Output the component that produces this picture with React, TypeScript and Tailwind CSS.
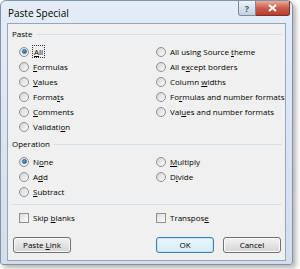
import React from 'react'

type Opt = { label: string; key: number; checked?: boolean; focus?: boolean }

const pasteLeft: Opt[] = [
  { label: 'All', key: 0, checked: true, focus: true },
  { label: 'Formulas', key: 0 },
  { label: 'Values', key: 0 },
  { label: 'Formats', key: 5 },
  { label: 'Comments', key: 0 },
  { label: 'Validation', key: 8 },
]

const pasteRight: Opt[] = [
  { label: 'All using Source theme', key: 17 },
  { label: 'All except borders', key: 5 },
  { label: 'Column widths', key: 7 },
  { label: 'Formulas and number formats', key: 2 },
  { label: 'Values and number formats', key: 3 },
]

const opLeft: Opt[] = [
  { label: 'None', key: 1, checked: true },
  { label: 'Add', key: 1 },
  { label: 'Subtract', key: 0 },
]

const opRight: Opt[] = [
  { label: 'Multiply', key: 0 },
  { label: 'Divide', key: 1 },
]

const Label = ({ label, k }: { label: string; k: number }) => (
  <span className="whitespace-nowrap">
    {label.slice(0, k)}
    <u>{label[k]}</u>
    {label.slice(k + 1)}
  </span>
)

const Radio = ({ checked }: { checked?: boolean }) => (
  <span className="w-[10px] h-[10px] rounded-full border border-[#8e8f8f] bg-gradient-to-br from-[#d4d4d4] to-[#fbfbfb] flex items-center justify-center shrink-0">
    {checked && <span className="w-[5px] h-[5px] rounded-full bg-gradient-to-br from-[#76b6ea] to-[#1b5fa8] border border-[#2c628b]" />}
  </span>
)

const Check = () => (
  <span className="w-[10px] h-[10px] border border-[#8e8f8f] bg-gradient-to-br from-[#dcdcdc] to-[#fdfdfd] shrink-0" />
)

const RadioRow = ({ o }: { o: Opt }) => (
  <div className="h-[15px] flex items-center gap-[4px] whitespace-nowrap">
    <Radio checked={o.checked} />
    <span className={o.focus ? 'outline outline-1 outline-dotted outline-[#333] px-[1px] leading-[11px]' : ''}>
      <Label label={o.label} k={o.key} />
    </span>
  </div>
)

const GroupHeader = ({ title }: { title: string }) => (
  <div className="h-[14px] flex items-center gap-[4px]">
    <span>{title}</span>
    <div className="flex-1 h-px bg-[#d5dfe5]" />
  </div>
)

const Btn = ({ children, def }: { children: React.ReactNode; def?: boolean }) => (
  <div
    className={
      'w-[58px] h-[16px] rounded-[3px] border flex items-center justify-center ' +
      (def
        ? 'border-[#3c7fb1] bg-gradient-to-b from-[#eaf6fd] to-[#d6edf9] shadow-[inset_0_0_0_1px_#c4e5f6]'
        : 'border-[#707070] bg-gradient-to-b from-[#f2f2f2] to-[#d5d5d5] shadow-[inset_0_0_0_1px_#fafafa]')
    }
  >
    {children}
  </div>
)

export default function App() {
  return (
    <div className="w-[300px] h-[269px] bg-white" style={{ fontFamily: '"Open Sans", "Noto Sans", sans-serif' }}>
      <div className="w-[293px] h-[265px] rounded-t-[6px] rounded-b-[3px] border border-[#8393a6] bg-gradient-to-b from-[#e4edf7] to-[#d3deeb] shadow-[3px_3px_5px_rgba(0,0,0,0.3)] flex flex-col">
        <div className="h-[22px] flex justify-between items-start shrink-0">
          <span className="text-[10px] text-black ml-[7px] mt-[6px] leading-[13px]">Paste Special</span>
          <div className="flex mr-[2px]">
            <div className="w-[18px] h-[15px] rounded-bl-[3px] border border-t-0 border-[#7b8a9b] bg-gradient-to-b from-[#eef3f9] to-[#c3d0df] flex items-center justify-center text-[9px] text-[#4a5868] font-bold leading-none">?</div>
            <div className="w-[34px] h-[15px] rounded-br-[3px] border border-t-0 border-l-0 border-[#7a3328] bg-gradient-to-b from-[#e8ab9c] via-[#cc5b4b] to-[#b63e2e] flex items-center justify-center">
              <svg width="9" height="8" viewBox="0 0 9 8">
                <path d="M1 1 L8 7 M8 1 L1 7" stroke="#fff" strokeWidth="2" />
              </svg>
            </div>
          </div>
        </div>
        <div className="mx-[6px] mb-[3px] flex-1 border border-[#97a7ba] bg-[#f0f0f0] pl-[4px] pr-[3px] pt-[3px] text-[8px] leading-[12px] text-black">
          <GroupHeader title="Paste" />
          <div className="mt-[3px] grid grid-cols-[137px_1fr] pl-[7px]">
            <div>{pasteLeft.map(o => <RadioRow key={o.label} o={o} />)}</div>
            <div>{pasteRight.map(o => <RadioRow key={o.label} o={o} />)}</div>
          </div>
          <div className="mt-[3px]">
            <GroupHeader title="Operation" />
          </div>
          <div className="mt-[3px] grid grid-cols-[137px_1fr] pl-[7px]">
            <div>{opLeft.map(o => <RadioRow key={o.label} o={o} />)}</div>
            <div>{opRight.map(o => <RadioRow key={o.label} o={o} />)}</div>
          </div>
          <div className="mt-[5px] h-px bg-[#d5dfe5]" />
          <div className="mt-[5px] grid grid-cols-[137px_1fr] pl-[7px]">
            <div className="h-[15px] flex items-center gap-[4px]"><Check /><Label label="Skip blanks" k={5} /></div>
            <div className="h-[15px] flex items-center gap-[4px]"><Check /><Label label="Transpose" k={8} /></div>
          </div>
          <div className="mt-[12px] flex items-center pl-[1px] pr-[1px]">
            <Btn><Label label="Paste Link" k={6} /></Btn>
            <div className="ml-auto flex gap-[9px]">
              <Btn def>OK</Btn>
              <Btn>Cancel</Btn>
            </div>
          </div>
        </div>
      </div>
    </div>
  )
}
